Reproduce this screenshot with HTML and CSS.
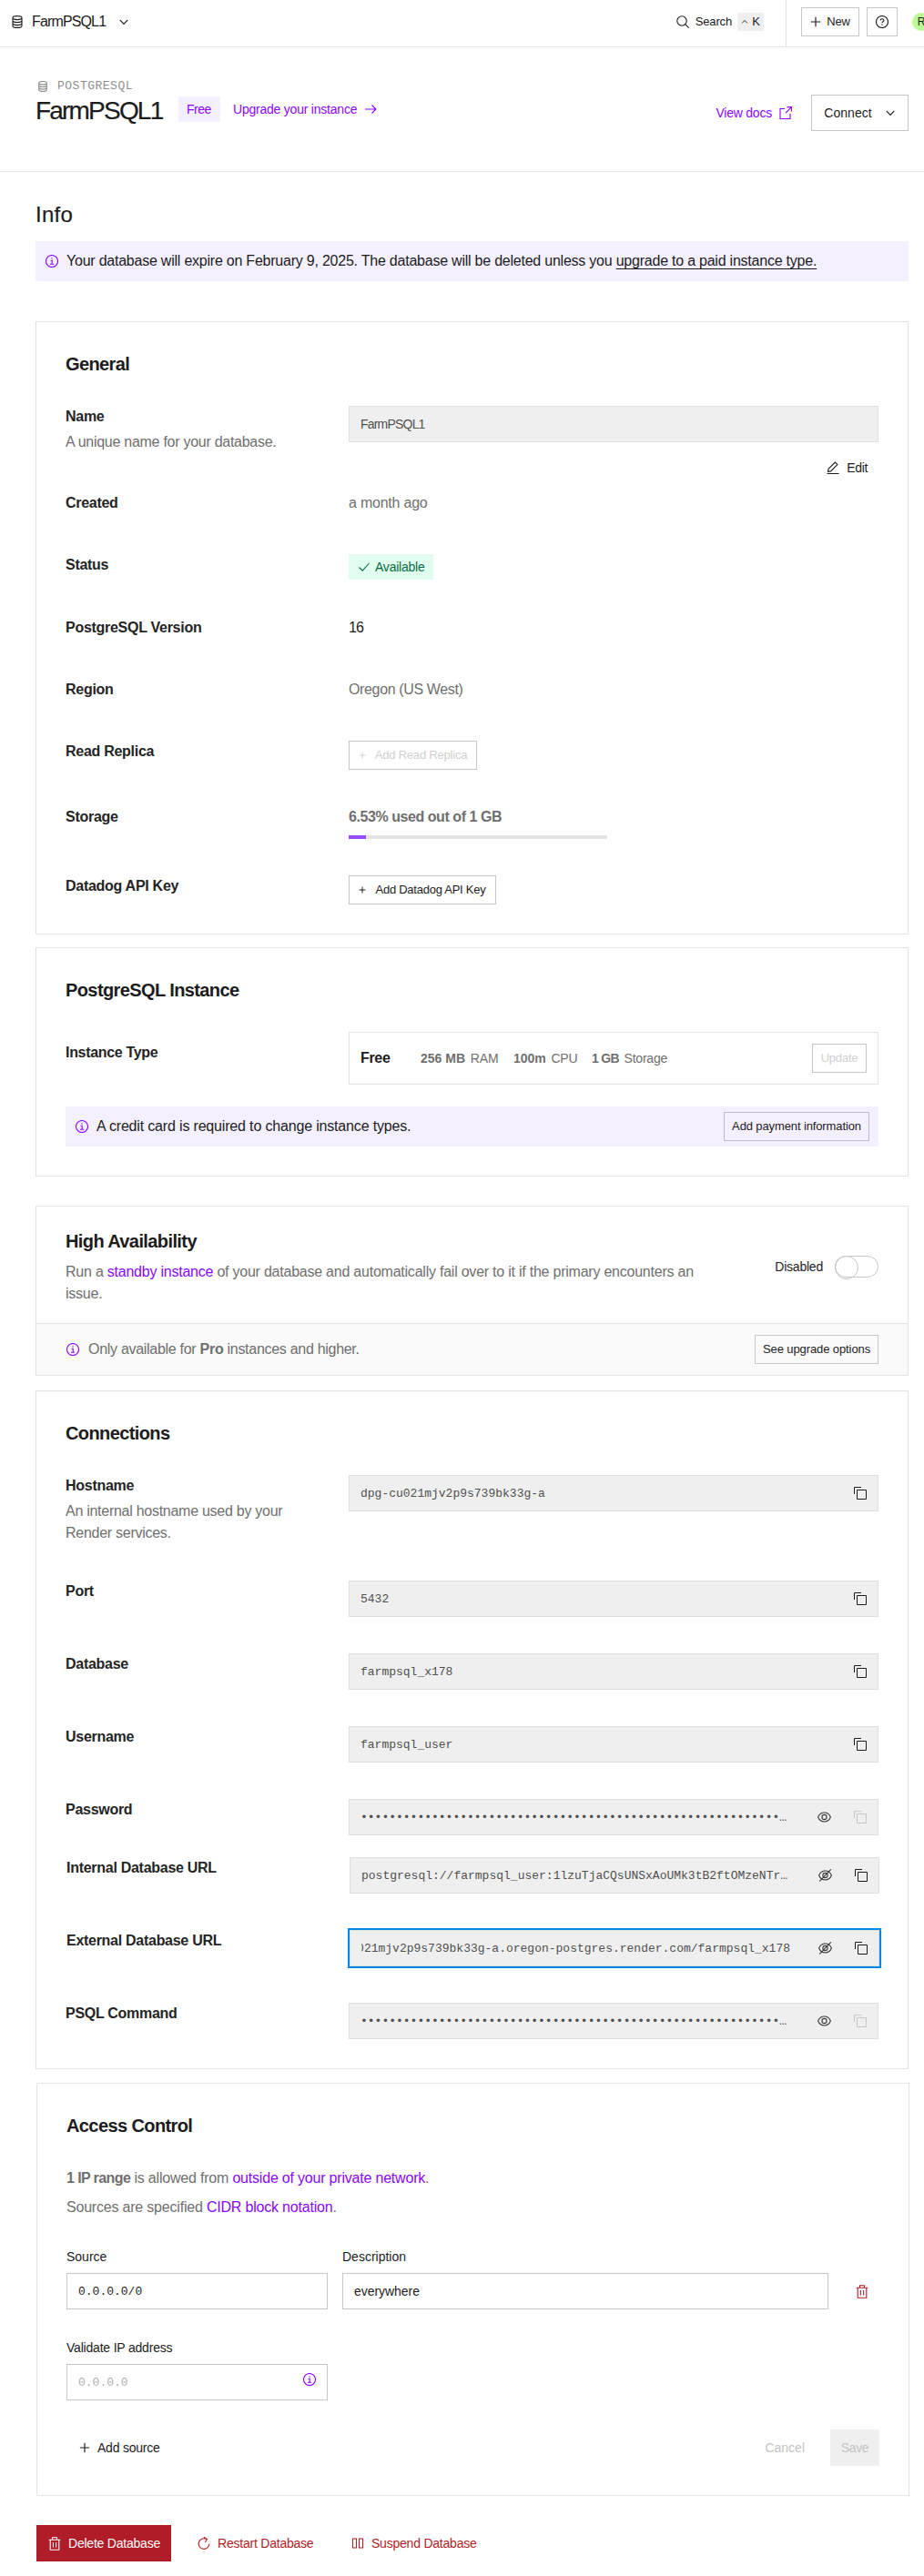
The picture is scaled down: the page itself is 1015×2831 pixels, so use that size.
FILE: index.html
```html
<!DOCTYPE html>
<html lang="en">
<head>
<meta charset="utf-8">
<title>FarmPSQL1</title>
<link rel="stylesheet" href="styles.css">
</head>
<body>
<svg class="sprite" aria-hidden="true">
  <symbol id="db" viewBox="0 0 14 14"><path d="M2 2.6C2 1.3 3.6.6 7 .6s5 .7 5 2v8.8c0 1.3-1.6 2-5 2s-5-.7-5-2zM2 2.6c0 1.3 1.6 2 5 2s5-.7 5-2M2 5.6c0 1.3 1.6 2 5 2s5-.7 5-2M2 8.6c0 1.3 1.6 2 5 2s5-.7 5-2"/></symbol>
  <symbol id="chevron" viewBox="0 0 14 14"><path d="M2 4.500 7 9.700l5-5.200"/></symbol>
  <symbol id="search" viewBox="0 0 14 14"><circle cx="6" cy="6" r="5.200"/><path d="m9.700 9.700 4 4"/></symbol>
  <symbol id="plus" viewBox="0 0 14 14"><path d="M7 1v12M1 7h12"/></symbol>
  <symbol id="help" viewBox="0 0 14 14"><circle cx="7" cy="7" r="6.500"/><path d="M5.100 5.600c0-1.200.8-1.900 1.900-1.900s1.900.7 1.900 1.700c0 1.300-1.900 1.400-1.900 2.900M7 9.500v1.200"/></symbol>
  <symbol id="arrow" viewBox="0 0 14 14"><path d="M1 7h12M8.500 2.500 13 7l-4.500 4.500"/></symbol>
  <symbol id="external" viewBox="0 0 14 14"><path d="M6 2.500H1v11h11V8M8.500.6h5v5M13.300.8 7 7.100"/></symbol>
  <symbol id="info" viewBox="0 0 14 14"><circle cx="7" cy="7" r="6.500"/><path d="M5.500 6.200H7.200v4M5 10.300h4.200M7 3.300v1.300"/></symbol>
  <symbol id="pencil" viewBox="0 0 14 14"><path d="M.5 13.500h13M2 8.300 9.300 1l2.600 2.600-7.300 7.300-3.100.5z"/></symbol>
  <symbol id="check" viewBox="0 0 14 14"><path d="m1.500 7.500 3.700 3.700L12.500 3"/></symbol>
  <symbol id="copy" viewBox="0 0 14 14"><path d="M3.500 3.500h10v10h-10zM.5 8V.5H8"/></symbol>
  <symbol id="eye" viewBox="0 0 15 14"><path d="M.6 7C2 3.700 4.500 2 7.500 2s5.500 1.700 6.900 5c-1.400 3.300-3.900 5-6.900 5S2 10.300.6 7z"/><circle cx="7.500" cy="7" r="2.600"/></symbol>
  <symbol id="eye-off" viewBox="0 0 15 14"><path d="M.6 7C2 3.700 4.500 2 7.500 2s5.500 1.700 6.900 5c-1.400 3.300-3.900 5-6.900 5S2 10.300.6 7zM1.200 13.600 13.800.4"/><circle cx="7.500" cy="7" r="2.600"/></symbol>
  <symbol id="trash" viewBox="0 0 14 15"><path d="M.7 3.200h12.600M4.500 3V.8h5V3M2.200 3.200v11h9.600v-11M5.400 6v5.500M8.600 6v5.500"/></symbol>
  <symbol id="restart" viewBox="0 0 14 14"><path d="M12.800 7.800A5.800 5.800 0 1 1 9.500 2.300M7 .3 10.500 2.600 8.200 6"/></symbol>
  <symbol id="pause" viewBox="0 0 14 14"><path d="M1.500 2h4v10h-4zM8.500 2h4v10h-4z"/></symbol>
</svg>

<header class="topbar">
  <div class="crumb"><svg class="icon"><use href="#db"/></svg><span class="crumb-name">FarmPSQL1</span><svg class="icon icon-12"><use href="#chevron"/></svg></div>
  <div class="search"><svg class="icon"><use href="#search"/></svg><span>Search</span><kbd class="key"><svg class="icon icon-caret"><use href="#chevron"/></svg>K</kbd></div>
  <div class="topbar-actions">
    <div class="btn btn-new"><svg class="icon icon-12"><use href="#plus"/></svg>New</div>
    <div class="btn btn-help"><svg class="icon"><use href="#help"/></svg></div>
    <div class="avatar">R</div>
  </div>
</header>

<section class="page-head">
  <div>
    <div class="kind"><svg class="icon icon-12"><use href="#db"/></svg>POSTGRESQL</div>
    <div class="title-line">
      <h1>FarmPSQL1</h1>
      <span class="plan">Free</span>
      <a class="upgrade">Upgrade your instance<svg class="icon"><use href="#arrow"/></svg></a>
    </div>
  </div>
  <div class="head-actions">
    <a class="docs">View docs<svg class="icon"><use href="#external"/></svg></a>
    <div class="btn btn-connect">Connect<svg class="icon icon-12"><use href="#chevron"/></svg></div>
  </div>
</section>

<main>
  <h2>Info</h2>
  <div class="alert"><svg class="icon"><use href="#info"/></svg><span class="notice">Your database will expire on February 9, 2025. The database will be deleted unless you <a>upgrade to a paid instance type.</a></span></div>

  <section class="card general">
    <h3>General</h3>
    <div class="rows general-rows">
      <div class="row">
        <div><div class="label">Name</div><p class="hint">A unique name for your database.</p></div>
        <div>
          <div class="field field-sans">FarmPSQL1</div>
          <div class="edit"><svg class="icon"><use href="#pencil"/></svg>Edit</div>
        </div>
      </div>
      <div class="row"><div class="label">Created</div><div class="muted">a month ago</div></div>
      <div class="row"><div class="label">Status</div><div><span class="status"><svg class="icon"><use href="#check"/></svg>Available</span></div></div>
      <div class="row"><div class="label">PostgreSQL Version</div><div class="version">16</div></div>
      <div class="row"><div class="label">Region</div><div class="muted tight">Oregon (US West)</div></div>
      <div class="row"><div class="label">Read Replica</div><div><div class="btn btn-add disabled replica"><svg class="icon icon-8"><use href="#plus"/></svg>Add Read Replica</div></div></div>
      <div class="row"><div class="label">Storage</div><div><div class="usage">6.53% used out of 1 GB</div><div class="meter"><div class="meter-fill" style="width:6.53%"></div></div></div></div>
      <div class="row"><div class="label">Datadog API Key</div><div><div class="btn btn-add datadog"><svg class="icon icon-8"><use href="#plus"/></svg>Add Datadog API Key</div></div></div>
    </div>
  </section>

  <section class="card instance">
    <h3>PostgreSQL Instance</h3>
    <div class="rows">
      <div class="row">
        <div class="label type-label">Instance Type</div>
        <div class="plan-box">
          <b class="plan-name">Free</b>
          <span class="ram"><b>256 MB</b> RAM</span>
          <span class="cpu"><b>100m</b> CPU</span>
          <span class="disk"><b>1 GB</b> Storage</span>
          <div class="btn disabled update">Update</div>
        </div>
      </div>
    </div>
    <div class="alert card-alert"><svg class="icon"><use href="#info"/></svg><span>A credit card is required to change instance types.</span><div class="btn payment">Add payment information</div></div>
  </section>

  <section class="card ha">
    <div class="ha-body">
      <div class="ha-copy"><h3>High Availability</h3><p class="muted">Run a <a>standby instance</a> of your database and automatically fail over to it if the primary encounters an issue.</p></div>
      <div class="switch-wrap">Disabled<span class="switch"></span></div>
    </div>
    <div class="ha-foot"><svg class="icon"><use href="#info"/></svg><span>Only available for <b>Pro</b> instances and higher.</span><div class="btn options">See upgrade options</div></div>
  </section>

  <section class="card connections">
    <h3>Connections</h3>
    <div class="rows connection-rows">
      <div class="row"><div><div class="label">Hostname</div><p class="hint">An internal hostname used by your Render services.</p></div><div class="field"><span class="value">dpg-cu021mjv2p9s739bk33g-a</span><svg class="icon"><use href="#copy"/></svg></div></div>
      <div class="row"><div class="label">Port</div><div class="field"><span class="value">5432</span><svg class="icon"><use href="#copy"/></svg></div></div>
      <div class="row"><div class="label">Database</div><div class="field"><span class="value">farmpsql_x178</span><svg class="icon"><use href="#copy"/></svg></div></div>
      <div class="row"><div class="label">Username</div><div class="field"><span class="value">farmpsql_user</span><svg class="icon"><use href="#copy"/></svg></div></div>
      <div class="row"><div class="label">Password</div><div class="field"><span class="value">•••••••••••••••••••••••••••••••••••••••••••••••••••••••••••…</span><svg class="icon eye"><use href="#eye"/></svg><svg class="icon off"><use href="#copy"/></svg></div></div>
      <div class="row shifted"><div class="label">Internal Database URL</div><div class="field"><span class="value">postgresql://farmpsql_user:1lzuTjaCQsUNSxAoUMk3tB2ftOMzeNTr…</span><svg class="icon eye"><use href="#eye-off"/></svg><svg class="icon"><use href="#copy"/></svg></div></div>
      <div class="row shifted"><div class="label">External Database URL</div><div class="field focused"><span class="value scrolled"><span>021mjv2p9s739bk33g-a.oregon-postgres.render.com/farmpsql_x178</span></span><svg class="icon eye"><use href="#eye-off"/></svg><svg class="icon"><use href="#copy"/></svg></div></div>
      <div class="row"><div class="label">PSQL Command</div><div class="field"><span class="value">•••••••••••••••••••••••••••••••••••••••••••••••••••••••••••…</span><svg class="icon eye"><use href="#eye"/></svg><svg class="icon off"><use href="#copy"/></svg></div></div>
    </div>
  </section>

  <section class="card access">
    <h3>Access Control</h3>
    <p class="muted first"><b>1 IP range</b> is allowed from <a>outside of your private network</a>.</p>
    <p class="muted">Sources are specified <a>CIDR block notation</a>.</p>
    <div class="sources">
      <div><div class="caption">Source</div><div class="input mono">0.0.0.0/0</div></div>
      <div><div class="caption">Description</div><div class="input">everywhere</div></div>
      <svg class="icon trash"><use href="#trash"/></svg>
    </div>
    <div class="validate"><div class="caption">Validate IP address</div><div class="input mono placeholder">0.0.0.0<svg class="icon"><use href="#info"/></svg></div></div>
    <div class="access-foot">
      <div class="add-source"><svg class="icon icon-12"><use href="#plus"/></svg>Add source</div>
      <div class="cancel">Cancel</div>
      <div class="save">Save</div>
    </div>
  </section>

  <footer class="danger">
    <div class="delete"><svg class="icon trash"><use href="#trash"/></svg>Delete Database</div>
    <div class="restart"><svg class="icon"><use href="#restart"/></svg>Restart Database</div>
    <div class="suspend"><svg class="icon"><use href="#pause"/></svg>Suspend Database</div>
  </footer>
</main>
</body>
</html>
```
FILE: styles.css
```css
* { box-sizing: border-box; }
body { margin: 0; font: 16px/24px "Liberation Sans", Arial, sans-serif; letter-spacing: -.22px; color: #1c1c1c; background: #fff; overflow-x: hidden; }
h1, h2, h3, p { margin: 0; }
a { color: #8a05ff; }
.sprite { display: none; }
.icon { width: 14px; height: 14px; flex: none; fill: none; stroke: currentColor; stroke-width: 1.100; overflow: visible; }
.icon-12 { width: 12px; height: 12px; stroke-width: 1.350; }
.icon-8 { width: 8px; height: 8px; stroke-width: 1.700; }
.muted { color: #6f6f6f; }
.tight { letter-spacing: -.36px; }
.version { letter-spacing: -1px; }

.btn { display: flex; align-items: center; justify-content: center; height: 32px; border: 1px solid #c7c7c7; font-size: 13px; line-height: 20px; white-space: nowrap; }
.disabled { color: #d0d0d0; }

.topbar { display: flex; align-items: stretch; height: 52px; border-bottom: 1px solid #e3e3e3; padding-left: 12px; overflow: hidden; }
.crumb { display: flex; align-items: center; flex: 1; padding-bottom: 3px; }
.crumb-name { margin: 0 14px 0 9px; letter-spacing: -.86px; }
.search { display: flex; align-items: center; padding: 0 24px 3px 0; font-size: 13px; letter-spacing: -.15px; gap: 7px; }
.key { display: flex; align-items: center; justify-content: center; gap: 4px; width: 29px; height: 20px; margin-left: -1px; background: #efefef; font: 13px/20px "Liberation Sans", sans-serif; }
.icon-caret { width: 8px; height: 8px; stroke-width: 1.600; transform: rotate(180deg); }
.topbar-actions { display: flex; align-items: flex-start; border-left: 1px solid #e3e3e3; padding: 8px 0 0 16px; width: 152px; }
.btn-new { flex: none; width: 64px; gap: 6px; margin-right: 8px; }
.btn-help { flex: none; width: 34px; margin-right: 16px; }
.avatar { flex: none; width: 20px; height: 20px; margin-top: 6px; border-radius: 50%; background: #bdf995; font-size: 12px; line-height: 20px; text-align: center; }

.page-head { display: flex; justify-content: space-between; align-items: flex-start; height: 137px; padding: 34px 17px 0 39px; border-bottom: 1px solid #e3e3e3; }
.kind { display: flex; align-items: center; gap: 10px; padding-left: 2px; height: 17px; color: #8f8f8f; font: 13px/16px "Liberation Mono", monospace; letter-spacing: .5px; }
.title-line { display: flex; align-items: flex-start; }
h1 { width: 157px; font-size: 28px; line-height: 37px; font-weight: 400; letter-spacing: -1.800px; -webkit-text-stroke: .2px; }
.plan { width: 46px; height: 28px; margin-top: 3px; padding-left: 9px; font-size: 14px; line-height: 28px; letter-spacing: -.5px; color: #8a05ff; background: #f4f0ff; }
.upgrade { display: flex; align-items: center; gap: 8px; height: 28px; margin: 3px 0 0 14px; font-size: 14px; }
.head-actions { display: flex; align-items: center; gap: 21px; margin-top: 18px; }
.docs { display: flex; align-items: center; gap: 8px; font-size: 14px; }
.btn-connect { height: 40px; width: 107px; font-size: 14px; letter-spacing: .05px; gap: 14px; }

main { padding: 31px 17px 16px 39px; }
h2 { font-size: 24px; line-height: 32px; font-weight: 400; letter-spacing: .3px; -webkit-text-stroke: .2px; margin-bottom: 13px; }
.alert { display: flex; align-items: center; gap: 9px; height: 44px; padding-left: 11px; background: #f4f0ff; }
.alert > .icon, .ha-foot > .icon { color: #8a05ff; }
.notice { letter-spacing: -.228px; }
.notice a { color: inherit; text-decoration: underline; text-underline-offset: 3px; text-decoration-thickness: 1px; }

.card { border: 1px solid #e3e3e3; padding: 32px; }
h3 { font-size: 20px; line-height: 28px; letter-spacing: -.6px; }
.rows { margin-top: 32px; }
.row { display: grid; grid-template-columns: 311px 582px; align-items: start; }
.label { font-weight: 700; letter-spacing: -.28px; color: #242424; }
.hint { width: 250px; margin-top: 4px; color: #6f6f6f; letter-spacing: -.27px; }
.field { display: flex; align-items: center; height: 40px; border: 1px solid #e0e0e0; background: #efefef; padding: 0 12px; color: #505050; font: 13px/20px "Liberation Mono", monospace; letter-spacing: 0; }
.field .icon { stroke-width: 1; color: #1c1c1c; margin-top: -1px; }
.field .eye { stroke-width: 1.100; width: 15px; height: 14px; margin-right: 25px; color: #3a3a3a; margin-top: 0; }
.field .off { color: #c7c7c7; }
.field-sans { font: 14px/20px "Liberation Sans", sans-serif; letter-spacing: -.8px; }
.value { flex: 1; white-space: nowrap; padding-top: 1px; }

.general { margin-top: 44px; }
.general-rows { display: grid; grid-template-rows: 95px 68px 69px 68px 68px 72px 76px 32px; }
.edit { display: flex; align-items: center; justify-content: flex-end; gap: 8px; height: 40px; margin-top: 8px; padding-right: 12px; font-size: 14px; letter-spacing: -.36px; }
.status { display: flex; align-items: center; gap: 5px; width: 93px; height: 28px; padding-left: 10px; background: #e0fdef; color: #0a6b46; font-size: 14px; }
.btn-add { gap: 10px; }
.replica { width: 141px; letter-spacing: -.2px; }
.datadog { width: 162px; letter-spacing: -.25px; }
.usage { font-weight: 700; color: #6f6f6f; letter-spacing: -.44px; }
.meter { width: 284px; height: 4px; margin-top: 8px; background: #e3e3e3; }
.meter-fill { height: 4px; background: #9a4dff; }

.instance { margin-top: 14px; }
.type-label { margin-top: 11px; letter-spacing: -.32px; }
.plan-box { display: flex; align-items: center; height: 58px; padding: 0 12px; border: 1px solid #e3e3e3; font-size: 14px; color: #6f6f6f; }
.plan-name { width: 66px; font-size: 16px; color: #1c1c1c; letter-spacing: -.32px; }
.ram { width: 102px; letter-spacing: -.1px; }
.cpu { width: 86px; }
.ram, .cpu, .disk { white-space: nowrap; }
.ram b, .cpu b { margin-right: 2px; letter-spacing: 0; }
.disk b { letter-spacing: -.7px; margin-right: 2px; }
.update { width: 60px; margin-left: auto; }
.card-alert { margin-top: 24px; padding-right: 10px; letter-spacing: -.17px; }
.payment { width: 160px; margin-left: auto; border-color: #bfbac9; letter-spacing: -.12px; }

.ha { margin-top: 32px; padding: 0; }
.ha-body { display: flex; align-items: center; justify-content: space-between; padding: 24px 32px 20px; }
.ha-copy { width: 700px; }
.ha-copy p { margin-top: 8px; letter-spacing: -.23px; }
.switch-wrap { display: flex; align-items: center; gap: 13px; font-size: 14px; }
.switch { width: 48px; height: 24px; border: 1px solid #c7c7c7; border-radius: 12px; }
.switch::before { content: ""; display: block; width: 24px; height: 24px; margin: -1px; border: 1px solid #c7c7c7; border-radius: 50%; }
.ha-foot { display: flex; align-items: center; gap: 10px; height: 57px; padding: 0 32px 0 33px; border-top: 1px solid #e3e3e3; background: #fafafa; color: #6f6f6f; letter-spacing: -.29px; }
.options { width: 136px; margin-left: auto; color: #1c1c1c; letter-spacing: -.1px; }

.connections { margin-top: 16px; }
.connection-rows { display: grid; grid-template-rows: 116px 80px 80px 80px 64px 80px 80px 40px; }
.shifted { margin-left: 1px; }
.focused { outline: 2px solid #0088e6; }
.scrolled { overflow: hidden; flex: 0 0 471px; margin-right: auto; display: flex; justify-content: flex-end; }

.access { margin: 15px -1px 0 1px; height: 454px; }
.access p { letter-spacing: -.2px; margin-top: 8px; }
.access .first { margin-top: 32px; }
.access b { letter-spacing: -.6px; }
.caption { font-size: 14px; line-height: 20px; margin-bottom: 8px; letter-spacing: 0; }
.validate .caption { letter-spacing: -.2px; }
.input { display: flex; align-items: center; height: 40px; border: 1px solid #c7c7c7; padding: 0 12px; font-size: 14px; letter-spacing: -.05px; }
.mono { font: 13px/20px "Liberation Mono", monospace; letter-spacing: 0; padding-top: 1px; }
.sources { display: grid; grid-template-columns: 287px 534px 14px; column-gap: 16px; margin-top: 32px; }
.trash { width: 14px; height: 15px; }
.sources .trash { color: #b01c27; margin: 41px 0 0 14px; }
.validate { width: 287px; margin-top: 32px; }
.placeholder { color: #b0b0b0; }
.placeholder .icon { color: #8a05ff; margin: -7px 0 0 auto; }
.access-foot { display: flex; align-items: center; height: 40px; margin-top: 32px; font-size: 14px; }
.add-source { display: flex; align-items: center; gap: 8px; padding-left: 14px; margin-right: auto; }
.cancel { color: #c4c4c4; letter-spacing: 0; margin-right: 28px; }
.save { width: 54px; height: 40px; line-height: 40px; text-align: center; color: #c4c4c4; background: #efefef; letter-spacing: -.38px; }

.danger { display: flex; margin: 32px 0 0 1px; height: 40px; font-size: 14px; color: #b01c27; }
.danger > div { display: flex; align-items: center; gap: 8px; }
.delete { width: 148px; padding-left: 13px; background: #b01c27; color: #fff; }
.restart { width: 169px; padding-left: 29px; }
.suspend { padding-left: 29px; }
```
